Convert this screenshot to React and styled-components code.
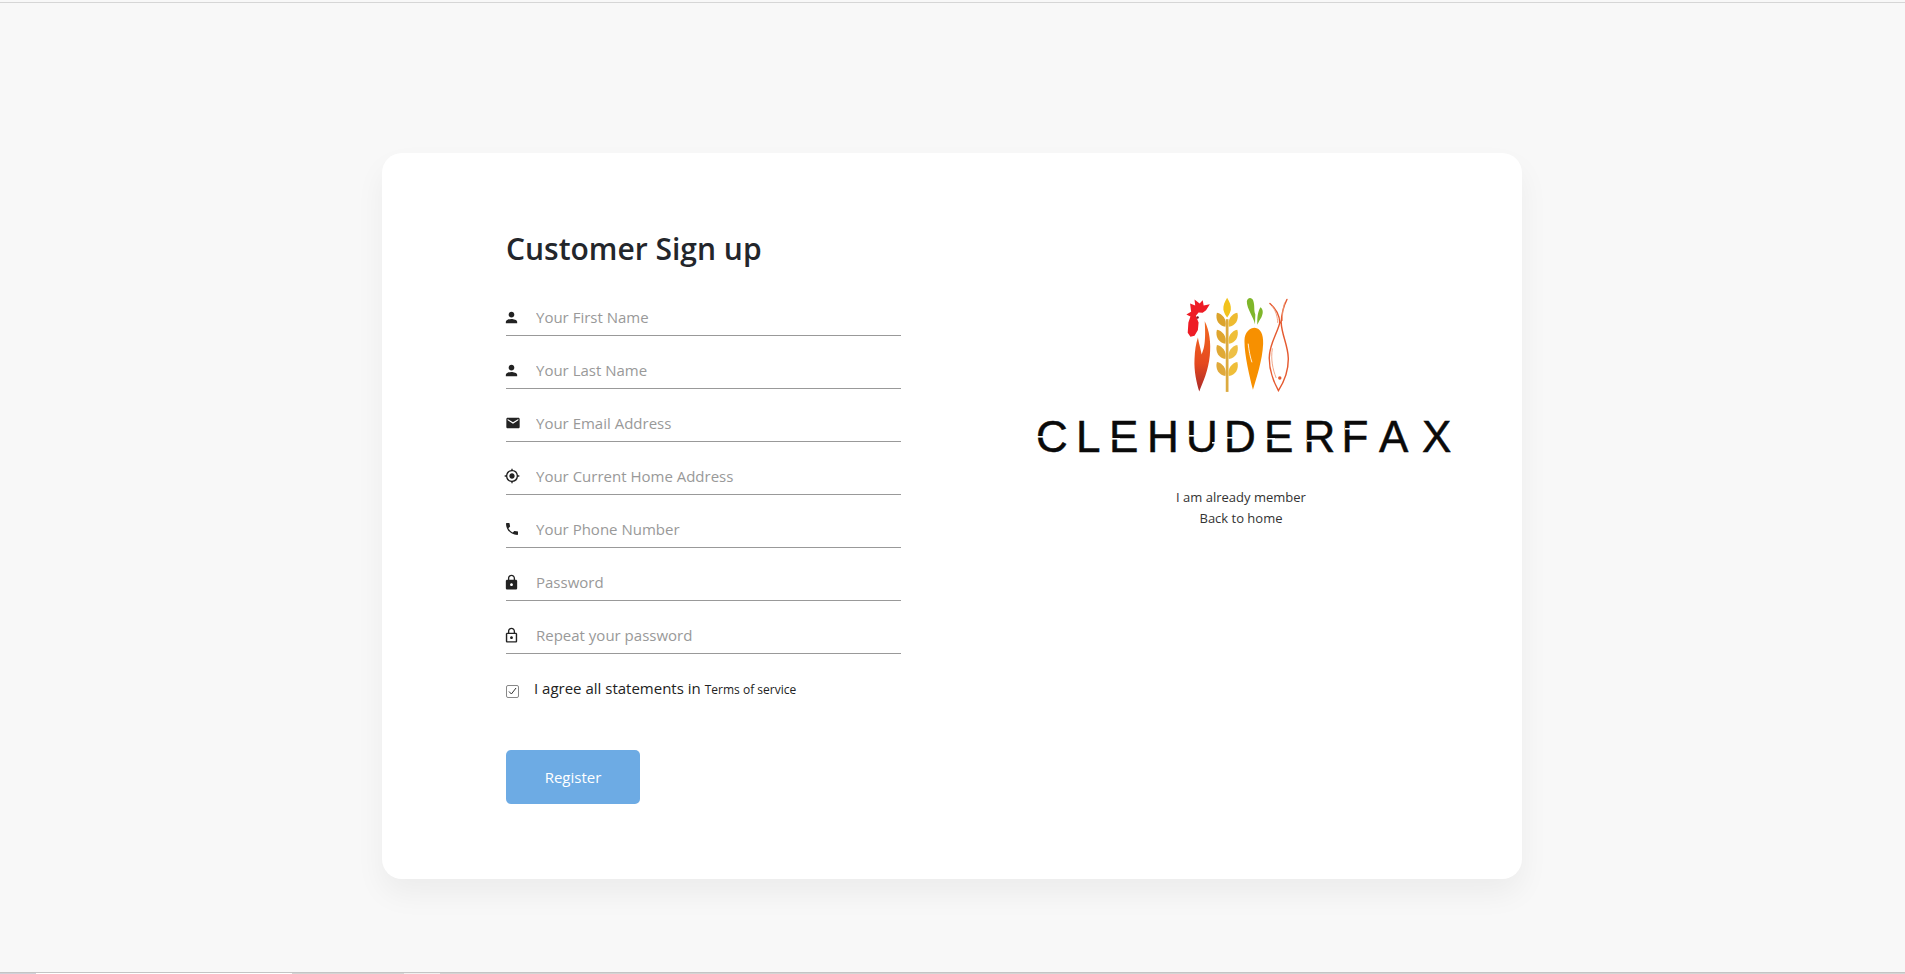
import React from "react";
import styled, { createGlobalStyle } from "styled-components";
import { MdPerson, MdEmail, MdMyLocation, MdPhone, MdLock, MdLockOutline } from "react-icons/md";

const Global = createGlobalStyle`
  html, body { margin: 0; padding: 0; background: #f8f8f8; }
  body { font-family: "Open Sans", "Noto Sans", sans-serif; color: #222; overflow: hidden; }
  * { box-sizing: border-box; }
`;

const Page = styled.div`
  height: 974px;
  display: flex;
  flex-direction: column;
`;
const TopEdge = styled.div`
  height: 3px;
  flex: none;
  background: #f8f8f8;
  border-bottom: 1px solid #d6d6d6;
`;
const Main = styled.main`
  flex: 1;
  padding: 150px 1px 0 0;
  display: flex;
  justify-content: center;
  align-items: flex-start;
`;
const Card = styled.section`
  width: 1140px;
  height: 726px;
  background: #fff;
  border-radius: 20px;
  box-shadow: 0 15px 30px rgba(0, 0, 0, 0.05);
  padding: 75px 71px 0 124px;
  display: grid;
  grid-template-columns: 395px 420px;
  column-gap: 130px;
  align-items: start;
`;
const Form = styled.form`
  display: flex;
  flex-direction: column;
`;
const Title = styled.h2`
  margin: 0 0 12px;
  height: 43px;
  font-size: 30px;
  line-height: 42px;
  font-weight: 600;
  color: #23262b;
`;
const Field = styled.label`
  height: 53px;
  display: flex;
  align-items: flex-end;
  border-bottom: 1px solid #999;
  padding-bottom: 8px;
`;
const IconSlot = styled.span`
  width: 30px;
  height: 20px;
  flex: none;
  display: flex;
  align-items: center;
  color: #222;
  svg { margin-left: ${(p) => p.$shift}px; }
`;
const Input = styled.input`
  flex: 1;
  min-width: 0;
  height: 20px;
  border: 0;
  outline: 0;
  padding: 0;
  background: transparent;
  font: 400 15px "Open Sans", sans-serif;
  color: #222;
  &::placeholder { color: #999; opacity: 1; }
`;
const Agree = styled.div`
  margin-top: 21px;
  height: 25px;
  display: flex;
  align-items: center;
`;
const Box = styled.span`
  width: 13px;
  height: 13px;
  flex: none;
  margin-top: 7px;
  margin-right: 15px;
  border: 1px solid #888;
  border-radius: 2px;
  display: flex;
  align-items: center;
  justify-content: center;
`;
const AgreeText = styled.span`
  font-size: 15px;
  color: #222;
  white-space: nowrap;
`;
const Terms = styled.a`
  font-size: 12px;
  color: #222;
  margin-left: 4px;
`;
const Register = styled.button`
  margin-top: 50px;
  width: 134px;
  height: 54px;
  border: 0;
  border-radius: 5px;
  background: #6dabe4;
  color: #fff;
  font: 500 15px "Open Sans", sans-serif;
`;
const Aside = styled.div`
  display: flex;
  flex-direction: column;
  align-items: center;
  padding-top: 68px;
`;
const Emblem = styled.svg`
  width: 106px;
  height: 97px;
  display: block;
  margin-right: 7px;
`;
const Wordmark = styled.svg`
  width: 420px;
  height: 54px;
  display: block;
  margin-top: 17px;
`;
const AsideLink = styled.a`
  display: block;
  font-size: 13px;
  line-height: 20.5px;
  font-weight: 400;
  color: #333;
  text-align: center;
`;
const Links = styled.div`
  margin-top: 23px;
`;
const BottomEdge = styled.div`
  height: 2px;
  flex: none;
  display: flex;
  background: #d2d2d2;
`;
const Tab = styled.div`
  width: ${(p) => p.$w}px;
  background: ${(p) => p.$c};
  border-top: 1px solid #c4c4c4;
`;

const fields = [
  ["Your First Name", <MdPerson size={17} />, -3],
  ["Your Last Name", <MdPerson size={17} />, -3],
  ["Your Email Address", <MdEmail size={16} />, -1],
  ["Your Current Home Address", <MdMyLocation size={16} />, -2],
  ["Your Phone Number", <MdPhone size={16} />, -2],
  ["Password", <MdLock size={17} />, -3],
  ["Repeat your password", <MdLockOutline size={17} />, -3],
];

const leaves = [
  [140, "#dba32b", "#eebb30"],
  [190, "#dfa52d", "#efbf38"],
  [235, "#e0a935", "#eec045"],
  [285, "#e0a93a", "#efbe38"],
];

function LogoMark() {
  return (
    <Emblem viewBox="500 50 312 285" aria-hidden="true">
      <defs>
        <linearGradient id="tail" x1="0" y1="0" x2="0" y2="1">
          <stop offset="0" stopColor="#f26a21" />
          <stop offset="0.6" stopColor="#e5491f" />
          <stop offset="1" stopColor="#a92a2a" />
        </linearGradient>
      </defs>
      {/* rooster */}
      <path fill="#ee1c25" d="M504 104 L518 96 L515 72 L530 78 L528 60 L543 72 L552 62 L555 78 L573 74 L562 92 L552 99 L540 98 L532 108 L540 128 L538 150 L528 167 L516 170 L508 158 L510 128 L516 110 Z" />
      <circle cx="537" cy="113" r="3.5" fill="#7a1420" />
      <path fill="url(#tail)" d="M558 124 C572 150 577 190 573 225 C569 270 552 305 542 331 C534 305 526 270 528 235 C529 210 532 190 538 172 C541 190 546 205 549 222 C556 205 562 185 558 124 Z" />
      {/* wheat */}
      <rect x="620" y="118" width="8" height="214" fill="#dcaa3f" />
      <path fill="#f2c31c" d="M624 55 C632 68 636 78 635 90 C633 100 628 107 624 113 C620 107 615 100 613 90 C612 78 616 68 624 55 Z" />
      {leaves.map(([y, l, r]) => (
        <g key={y}>
          <path fill={l} d={`M619 ${y} C600 ${y - 2} 588 ${y - 20} 594 ${y - 41} C610 ${y - 38} 624 ${y - 22} 619 ${y} Z`} />
          <path fill={r} d={`M629 ${y} C648 ${y - 2} 660 ${y - 20} 654 ${y - 41} C638 ${y - 38} 624 ${y - 22} 629 ${y} Z`} />
        </g>
      ))}
      {/* carrot */}
      <path fill="#7fb62a" d="M706 133 C702 112 682 88 682 66 C683 54 697 52 701 64 C706 80 702 92 707 104 Z" />
      <path fill="#7fb62a" d="M713 134 C712 116 714 96 722 83 C730 88 731 100 725 112 C720 120 716 127 713 134 Z" />
      <path fill="#f79000" d="M675 182 C675 155 692 143 705 143 C722 144 731 162 730 190 C728 240 710 290 700 326 C690 285 675 225 675 182 Z" />
      <path fill="none" stroke="#fff" strokeWidth="2.5" d="M686 190 C688 210 692 230 697 245" />
      {/* fish */}
      <g fill="none" stroke="#e55a30" strokeWidth="4.2" strokeLinecap="round">
        <path d="M750 72 C765 85 778 105 779 128 C772 160 748 190 748 232 C748 270 762 305 775 328 C790 305 805 270 804 232 C803 195 785 165 783 128 C784 105 790 80 800 60" />
        <path stroke="#ee9a78" strokeWidth="2.6" d="M757 80 C768 95 772 110 773 128 M793 70 C788 88 786 105 787 122" />
        <path stroke="#ee9a78" strokeWidth="2.6" d="M757 205 C752 235 758 265 768 290" />
      </g>
      <circle cx="779" cy="291" r="5" fill="#e55a30" />
    </Emblem>
  );
}

const cuts = [
  [6, 20, 10], [81, 22, 8], [158, 19, 8], [181, 26, 8], [196, 21, 8], [236, 22, 8], [276, 24, 8], [314, 12, 8], [322, 9, 16],
];

function LogoWord() {
  return (
    <Wordmark viewBox="0 -6 420 54" aria-label="CLEHUDERFAX">
      <text
        y="36"
        x="5 45 78 116 155 193 233 272.5 310.4 348 391"
        fontFamily="Liberation Sans, sans-serif"
        fontSize="44"
        fill="#0a0a0a"
        stroke="#0a0a0a"
        strokeWidth="0.5"
      >
        CLEHUDERFAX
      </text>
      {cuts.map(([x, y, w]) => (
        <rect key={`${x}-${y}`} x={x} y={y} width={w} height="1.6" fill="#fff" />
      ))}
    </Wordmark>
  );
}

export default function App() {
  return (
    <Page>
      <Global />
      <TopEdge />
      <Main>
        <Card>
          <Form onSubmit={(e) => e.preventDefault()}>
            <Title>Customer Sign up</Title>
            {fields.map(([label, icon, shift]) => (
              <Field key={label}>
                <IconSlot $shift={shift}>{icon}</IconSlot>
                <Input placeholder={label} />
              </Field>
            ))}
            <Agree>
              <Box>
                <svg width="9" height="8" viewBox="0 0 9 8" fill="none" stroke="#333" strokeWidth="1">
                  <path d="M1 4.5 L3.4 7 L8 1" />
                </svg>
              </Box>
              <AgreeText>
                I agree all statements in<Terms>Terms of service</Terms>
              </AgreeText>
            </Agree>
            <Register type="button">Register</Register>
          </Form>
          <Aside>
            <LogoMark />
            <LogoWord />
            <Links>
              <AsideLink>I am already member</AsideLink>
              <AsideLink>Back to home</AsideLink>
            </Links>
          </Aside>
        </Card>
      </Main>
      <BottomEdge>
        <Tab $w={36} $c="#d0d0d8" />
        <Tab $w={256} $c="#fff" />
        <Tab $w={112} $c="#d4d4d4" />
        <Tab $w={36} $c="#efefef" />
        <Tab $w={1465} $c="#d4d4d4" />
      </BottomEdge>
    </Page>
  );
}
